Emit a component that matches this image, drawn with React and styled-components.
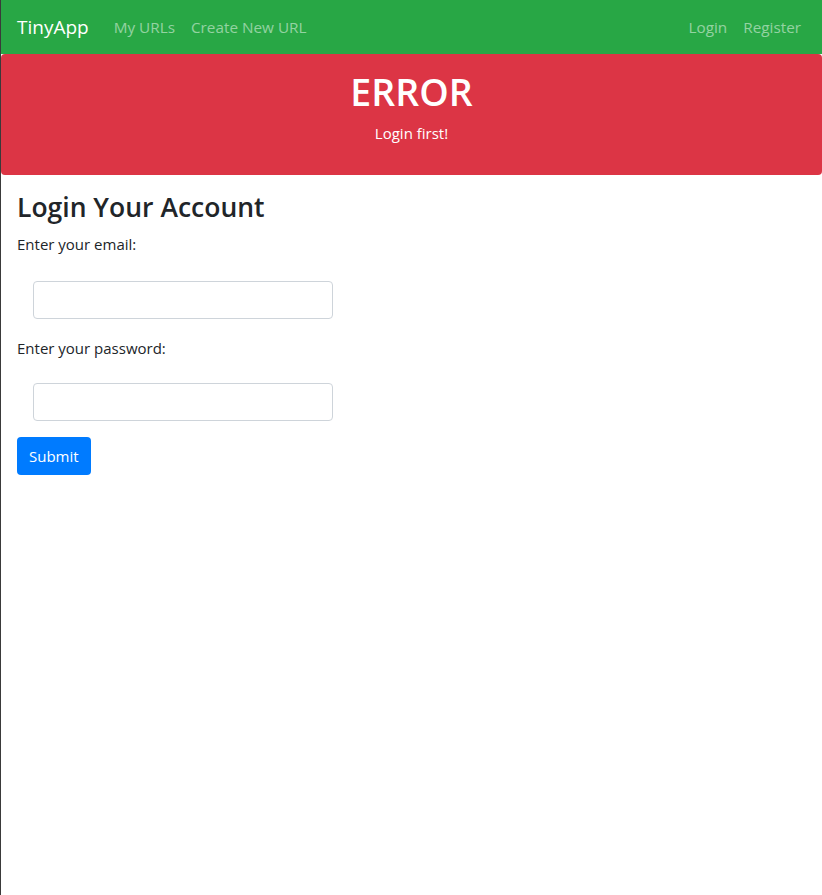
import React from "react";
import styled, { createGlobalStyle } from "styled-components";

const GlobalStyle = createGlobalStyle`
  html, body {
    margin: 0;
    padding: 0;
    background: #fff;
  }
  body {
    font-family: "Segoe UI", "Open Sans", "Noto Sans", sans-serif;
    font-size: 16px;
    line-height: 1.5;
    color: #212529;
    border-left: 1px solid #3a3a3a;
    min-height: 895px;
    box-sizing: border-box;
  }
  * {
    box-sizing: border-box;
  }
`;

const Navbar = styled.nav`
  display: flex;
  align-items: center;
  height: 54px;
  padding: 0 13px 0 17px;
  margin-left: -1px;
  background-color: #28a745;
`;

const Brand = styled.a`
  font-size: 19px;
  color: #fff;
  margin-right: 17px;
  text-decoration: none;
`;

const NavList = styled.div`
  display: flex;
  align-items: center;
  margin-left: ${props => (props.right ? "auto" : "0")};
`;

const NavLink = styled.a`
  padding: 0 8px;
  font-size: 15.3px;
  color: rgba(255, 255, 255, 0.5);
  text-decoration: none;
`;

const Jumbotron = styled.div`
  background-color: #dc3545;
  color: #fff;
  text-align: center;
  border-radius: 4px;
  height: 121px;
  padding-top: 15px;
`;

const ErrorTitle = styled.h1`
  margin: 0;
  font-size: 37.5px;
  font-weight: 600;
  line-height: 1.2;
`;

const ErrorMessage = styled.p`
  margin: 8px 0 0;
  font-size: 15px;
`;

const Content = styled.main`
  padding: 17px 16px;
`;

const Heading = styled.h3`
  margin: 0 0 8px;
  font-size: 26.5px;
  font-weight: 600;
  line-height: 1.2;
`;

const Label = styled.label`
  display: block;
  font-size: 15px;
  line-height: 24px;
`;

const Input = styled.input`
  display: block;
  width: 300px;
  height: 38px;
  margin: ${props => props.gap}px 0 17px 16px;
  padding: 6px 12px;
  border: 1px solid #ced4da;
  border-radius: 4px;
  font-size: 16px;
  background: #fff;
`;

const Button = styled.button`
  display: block;
  height: 38px;
  padding: 0 12px;
  border: none;
  border-radius: 4px;
  background-color: #007bff;
  color: #fff;
  font-family: inherit;
  font-size: 15px;
  cursor: pointer;
  margin-top: -1px;
`;

export default function App() {
  return (
    <>
      <GlobalStyle />
      <Navbar>
        <Brand href="#">TinyApp</Brand>
        <NavList>
          <NavLink href="#">My URLs</NavLink>
          <NavLink href="#">Create New URL</NavLink>
        </NavList>
        <NavList right>
          <NavLink href="#">Login</NavLink>
          <NavLink href="#">Register</NavLink>
        </NavList>
      </Navbar>
      <Jumbotron>
        <ErrorTitle>ERROR</ErrorTitle>
        <ErrorMessage>Login first!</ErrorMessage>
      </Jumbotron>
      <Content>
        <Heading>Login Your Account</Heading>
        <form>
          <Label htmlFor="email">Enter your email:</Label>
          <Input id="email" type="text" gap={25} />
          <Label htmlFor="password">Enter your password:</Label>
          <Input id="password" type="password" gap={23} />
          <Button type="submit">Submit</Button>
        </form>
      </Content>
    </>
  );
}
